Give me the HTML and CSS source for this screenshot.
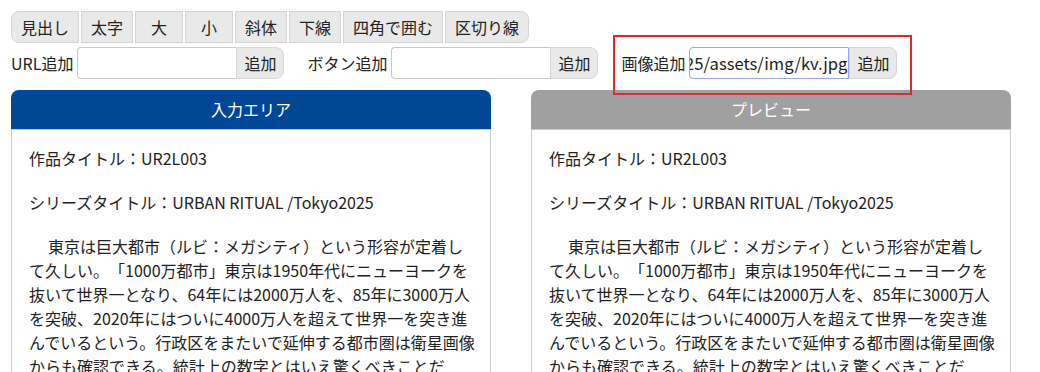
FILE: index.html
```html
<!doctype html>
<html>
<head>
<meta charset="utf-8"/>
<title>エディタ</title>
<link rel="stylesheet" href="styles.css">
</head>
<body>
<div class="page">
	<div class="tools">
		<button class="tool">見出し</button>
		<button class="tool">太字</button>
		<button class="tool">大</button>
		<button class="tool">小</button>
		<button class="tool">斜体</button>
		<button class="tool">下線</button>
		<button class="tool">四角で囲む</button>
		<button class="tool">区切り線</button>
	</div>
	<div class="adders">
		<div class="adder">
			<label>URL追加</label>
			<input type="text" class="field">
			<button class="add">追加</button>
		</div>
		<div class="adder">
			<label>ボタン追加</label>
			<input type="text" class="field">
			<button class="add">追加</button>
		</div>
		<div class="adder mark">
			<label>画像追加</label>
			<div class="field focus"><span>25/assets/img/kv.jpg</span></div>
			<button class="add">追加</button>
		</div>
	</div>
	<div class="panels">
		<div class="panel">
			<div class="head blue">入力エリア</div>
			<div class="body">
				<p>作品タイトル：UR2L003</p>
				<p>シリーズタイトル：URBAN RITUAL /Tokyo2025</p>
				<p class="lead">　東京は巨大都市（ルビ：メガシティ）という形容が定着して久しい。「1000万都市」東京は1950年代にニューヨークを抜いて世界一となり、64年には2000万人を、85年に3000万人を突破、2020年にはついに4000万人を超えて世界一を突き進んでいるという。行政区をまたいで延伸する都市圏は衛星画像からも確認できる。統計上の数字とはいえ驚くべきことだ</p>
			</div>
		</div>
		<div class="panel">
			<div class="head gray">プレビュー</div>
			<div class="body">
				<p>作品タイトル：UR2L003</p>
				<p>シリーズタイトル：URBAN RITUAL /Tokyo2025</p>
				<p class="lead">　東京は巨大都市（ルビ：メガシティ）という形容が定着して久しい。「1000万都市」東京は1950年代にニューヨークを抜いて世界一となり、64年には2000万人を、85年に3000万人を突破、2020年にはついに4000万人を超えて世界一を突き進んでいるという。行政区をまたいで延伸する都市圏は衛星画像からも確認できる。統計上の数字とはいえ驚くべきことだ</p>
			</div>
		</div>
	</div>
</div>
</body>
</html>
```

FILE: styles.css
```css
body {
	margin: 0;
	font-family: "Noto Sans CJK JP", "Noto Sans", sans-serif;
	font-size: 16px;
	color: #222;
	background: #fff;
	overflow: hidden;
}
.page {
	padding: 11px;
}
button {
	font-family: inherit;
	font-size: 16px;
	color: #222;
	background: #e9e9e9;
	border: 1px solid #d6d6d6;
	height: 32px;
	padding: 0 9px;
	cursor: pointer;
}
.tools {
	display: flex;
	gap: 2px;
}
.tool {
	min-width: 48px;
	border-radius: 0;
}
.tool:first-child {
	border-radius: 8px 0 0 8px;
}
.tool:last-child {
	border-radius: 0 8px 8px 0;
}
.adders {
	display: flex;
	gap: 23px;
	margin-top: 4px;
}
.adder {
	display: flex;
	align-items: center;
	height: 32px;
	position: relative;
}
.adder label {
	margin-right: 4px;
	white-space: nowrap;
}
.field {
	box-sizing: border-box;
	flex: none;
	width: 159px;
	height: 32px;
	border: 1px solid #c8c8c8;
	border-right: none;
	border-radius: 4px 0 0 4px;
	font-family: inherit;
	font-size: 16px;
	padding: 0 4px;
	outline: none;
	background: #fff;
}
.field.focus {
	display: flex;
	align-items: center;
	justify-content: flex-end;
	overflow: hidden;
	white-space: nowrap;
	border: 1px solid #9aa4f0;
	padding: 0 1px 0 0;
	width: 160px;
	font-size: 16.6px;
}
.add {
	flex: none;
	width: 48px;
	border-radius: 0 8px 8px 0;
	padding: 0;
}
.mark::after {
	content: "";
	position: absolute;
	left: -8px;
	right: -15px;
	top: -12px;
	bottom: -16px;
	border: 2px solid #e8262b;
	pointer-events: none;
	z-index: 2;
}
.panels {
	display: flex;
	gap: 40px;
	margin-top: 11px;
}
.panel {
	width: 480px;
}
.head {
	height: 39px;
	line-height: 39px;
	text-align: center;
	color: #fff;
	font-size: 16px;
	border-radius: 8px 8px 0 0;
	border-bottom: 1px solid #ccc;
}
.blue {
	background: #004896;
}
.gray {
	background: #a0a0a0;
}
.body {
	border: 1px solid #ccc;
	border-top: none;
	padding: 16px 13px 16px 17px;
	height: 400px;
	line-height: 24px;
	text-spacing-trim: space-all;
}
.body p {
	margin: 0 0 20px;
}
.body .lead {
	text-indent: 3px;
}
```
